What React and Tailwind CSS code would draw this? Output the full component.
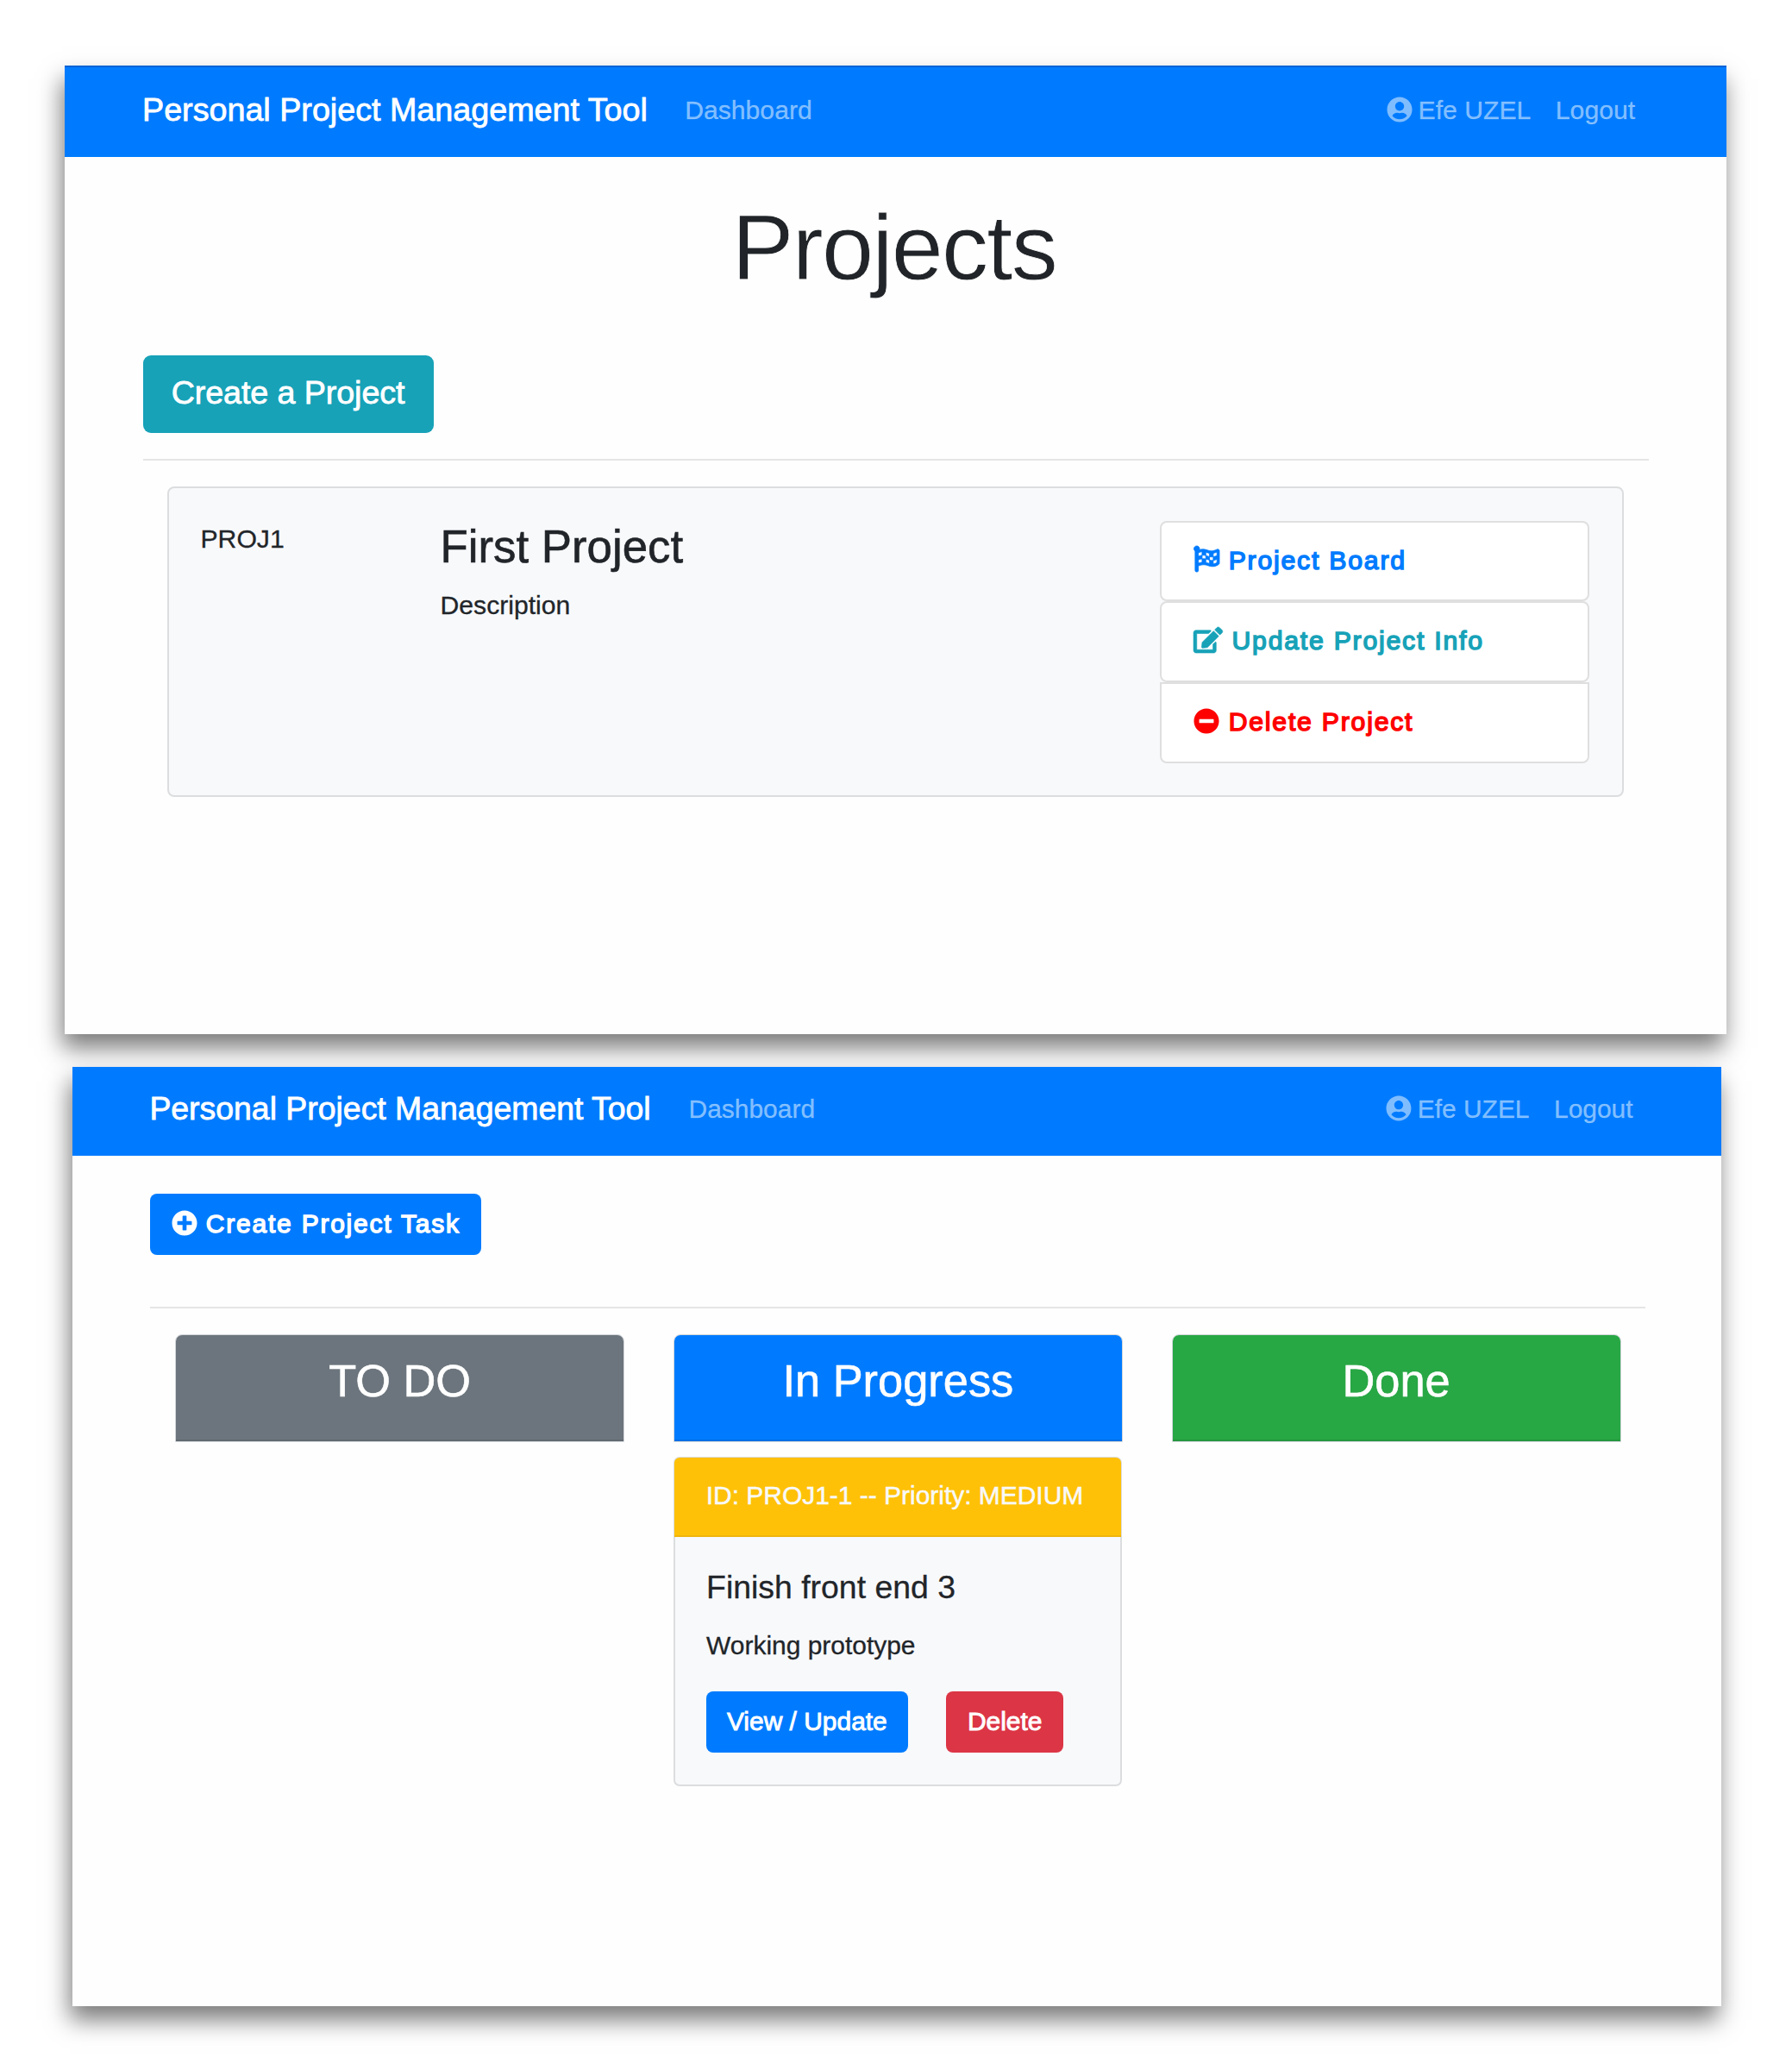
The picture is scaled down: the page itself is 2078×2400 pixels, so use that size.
import { FaUserCircle, FaFlagCheckered, FaEdit, FaMinusCircle, FaPlusCircle } from "react-icons/fa";

const PANEL_SHADOW = "shadow-[-3px_16px_26px_rgba(0,0,0,0.52)]";

function ProjectAction({ icon: Icon, iconStyle, label, tone, shape }) {
  return (
    <li className={`flex h-[93.6px] items-start border-2 border-[#dfdfdf] bg-white pt-[20.8px] pl-[37.4px] ${tone} ${shape}`}>
      <Icon className={`mt-[6.9px] shrink-0 overflow-visible ${iconStyle}`} />
      <span className="ml-[10.8px] text-[30.16px] leading-[45px] tracking-[1.8px] whitespace-nowrap [-webkit-text-stroke:1.5px_currentColor]">
        {label}
      </span>
    </li>
  );
}

function ProjectsScreen() {
  return (
    <section className={`ml-[75px] h-[1123px] w-[1927.4px] bg-[#fefefe] ${PANEL_SHADOW}`}>
      <nav className="flex h-[105.6px] items-start border-t-2 border-[#0062d6] bg-[#007bff] pl-[90px] whitespace-nowrap text-white/50">
        <a className="mt-[21px] w-[629.2px] text-[37.7px] leading-[56px] text-white [-webkit-text-stroke:0.8px_currentColor]">
          Personal Project Management Tool
        </a>
        <a className="mt-[27px] text-[30.16px] leading-[45px] [-webkit-text-stroke:0.4px_rgba(255,255,255,0.3)]">Dashboard</a>
        <div className="mt-[27px] mr-[106.3px] ml-auto flex text-[30.16px] leading-[45px] [-webkit-text-stroke:0.4px_rgba(255,255,255,0.3)]">
          <a className="mr-[28.5px] flex">
            <FaUserCircle className="mt-[7px] mr-[7px] h-[30px] w-[30px]" />
            Efe UZEL
          </a>
          <a>Logout</a>
        </div>
      </nav>
      <main className="px-[90.5px]">
        <h1 className="mt-[42.6px] mr-[4px] text-center text-[108px] leading-[126px] font-light tracking-[-1.7px] [-webkit-text-stroke:0.8px_#fefefe]">
          Projects
        </h1>
        <button className="mt-[61.9px] block h-[90px] w-[337px] rounded-[9px] bg-[#17a2b8] pb-[4px] text-[37.7px] leading-[56px] tracking-[-0.1px] whitespace-nowrap text-white [-webkit-text-stroke:0.8px_currentColor]">
          Create a Project
        </button>
        <hr className="mt-[30px] border-t-2 border-[#e5e5e5]" />
        <article className="mt-[30px] ml-[28.5px] flex h-[360px] w-[1688.5px] rounded-[8px] border-2 border-[#dcdddf] bg-[#f8f9fb] pt-[36px] pl-[36.5px]">
          <span className="w-[278px] text-[30.16px] leading-[45px] [-webkit-text-stroke:0.3px_currentColor]">PROJ1</span>
          <div className="w-[834px]">
            <h3 className="text-[52.8px] leading-[63px] [-webkit-text-stroke:0.6px_currentColor]">First Project</h3>
            <p className="mt-[14px] text-[30.16px] leading-[45px] [-webkit-text-stroke:0.3px_currentColor]">Description</p>
          </div>
          <ul className="mt-[1.7px] w-[498.8px]">
            <ProjectAction icon={FaFlagCheckered} iconStyle="h-[30px] w-[30px] stroke-[14px]" label="Project Board" tone="text-[#007bff]" shape="rounded-[8px]" />
            <ProjectAction icon={FaEdit} iconStyle="h-[30px] w-[33.8px] stroke-[10px]" label="Update Project Info" tone="text-[#17a2b8]" shape="rounded-[8px]" />
            <ProjectAction icon={FaMinusCircle} iconStyle="h-[30px] w-[30px]" label="Delete Project" tone="text-[#ff0000]" shape="rounded-b-[8px]" />
          </ul>
        </article>
      </main>
    </section>
  );
}

function ColumnHeader({ title, tone }) {
  return (
    <div className="h-[125px] rounded-t-[8px] border border-[#d3d6da]">
      <div className={`h-full rounded-t-[7px] border-b-2 border-black/10 pt-[21.8px] text-center text-[52.4px] leading-[63px] text-white [-webkit-text-stroke:0.6px_currentColor] ${tone}`}>
        {title}
      </div>
    </div>
  );
}

function TaskCard() {
  return (
    <article className="mx-[0.4px] mt-[17px] h-[382px] rounded-[7px] border-2 border-[#dcdddf] bg-[#f8f9fb]">
      <header className="-mx-[1px] -mt-[1px] h-[92px] rounded-t-[6px] border-b-2 border-[#efb50a] bg-[#ffc107] pt-[20.6px] pl-[36.5px] text-[29.94px] leading-[45px] whitespace-nowrap text-[#f8f9fa] [-webkit-text-stroke:0.5px_currentColor]">
        ID: PROJ1-1 -- Priority: MEDIUM
      </header>
      <div className="px-[35.8px]">
        <h5 className="mt-[35.5px] text-[37.4px] leading-[45px] [-webkit-text-stroke:0.3px_currentColor]">Finish front end 3</h5>
        <p className="mt-[22.6px] text-[29.94px] leading-[45px] [-webkit-text-stroke:0.3px_currentColor]">Working prototype</p>
        <div className="mt-[30.7px] flex gap-[44.6px] text-[29.94px] leading-[45px] whitespace-nowrap text-white">
          <button className="h-[71.4px] w-[233.5px] rounded-[8px] bg-[#007bff] pb-[2px] [-webkit-text-stroke:0.9px_currentColor]">View / Update</button>
          <button className="h-[71.4px] w-[136px] rounded-[8px] bg-[#dc3545] pb-[2px] [-webkit-text-stroke:0.9px_currentColor]">Delete</button>
        </div>
      </div>
    </article>
  );
}

function BoardScreen() {
  return (
    <section className={`relative mt-[38px] ml-[83.6px] h-[1089px] w-[1912.6px] bg-[#fefefe] ${PANEL_SHADOW}`}>
      <nav className="flex h-[102.5px] items-start bg-[#007bff] pl-[89.8px] whitespace-nowrap text-white/50">
        <a className="mt-[20px] w-[625.2px] text-[37.4px] leading-[56px] text-white [-webkit-text-stroke:0.8px_currentColor]">
          Personal Project Management Tool
        </a>
        <a className="mt-[26px] text-[29.94px] leading-[45px] [-webkit-text-stroke:0.4px_rgba(255,255,255,0.3)]">Dashboard</a>
        <div className="mt-[26px] mr-[102.6px] ml-auto flex text-[29.94px] leading-[45px] [-webkit-text-stroke:0.4px_rgba(255,255,255,0.3)]">
          <a className="mr-[28.5px] flex">
            <FaUserCircle className="mt-[7px] mr-[7px] h-[29.9px] w-[29.9px]" />
            Efe UZEL
          </a>
          <a>Logout</a>
        </div>
      </nav>
      <main className="pr-[88.4px] pl-[90.2px]">
        <button className="mt-[44.7px] flex h-[71px] w-[384.6px] items-start rounded-[8px] bg-[#007bff] pt-[12px] pl-[24.9px] text-white">
          <FaPlusCircle className="mt-[6.5px] h-[30px] w-[30px] shrink-0" />
          <span className="ml-[10.2px] text-[29.94px] leading-[45px] tracking-[1.8px] whitespace-nowrap [-webkit-text-stroke:1.4px_currentColor]">
            Create Project Task
          </span>
        </button>
        <hr className="mt-[59.5px] border-t-2 border-[#e5e5e5]" />
        <div className="mt-[30.4px] ml-[29.4px] grid w-[1676.4px] grid-cols-3 gap-[56.8px]">
          <ColumnHeader title="TO DO" tone="bg-[#6c757d]" />
          <div>
            <ColumnHeader title="In Progress" tone="bg-[#007bff]" />
            <TaskCard />
          </div>
          <ColumnHeader title="Done" tone="bg-[#28a745]" />
        </div>
      </main>
    </section>
  );
}

export default function App() {
  return (
    <div className="h-[2400px] w-[2078px] overflow-hidden bg-white pt-[76px] font-['Liberation_Sans',Arial,sans-serif] text-[#212529]">
      <ProjectsScreen />
      <BoardScreen />
    </div>
  );
}
